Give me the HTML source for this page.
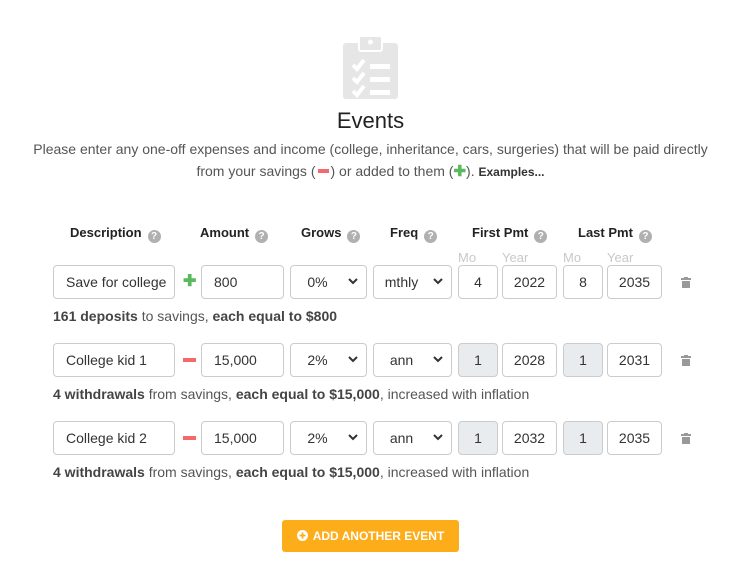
<!DOCTYPE html>
<html><head><meta charset="utf-8"><style>
*{box-sizing:border-box;margin:0;padding:0}
body{width:741px;height:565px;background:#fff;font-family:"Liberation Sans",sans-serif;color:#333;position:relative;overflow:hidden}
.a{position:absolute}
.in{position:absolute;height:34px;border:1px solid #ccc;border-radius:4px;background:#fff;font-size:14px;color:#333;line-height:32px;text-align:center}
.dis{background:#e9ecef}
.lt{text-align:left;padding-left:12px}
.sel span{position:absolute;left:0;right:22px;text-align:center}
.sel svg{position:absolute;right:8px;top:12px}
.h{position:absolute;top:225px;font-size:13px;font-weight:bold;color:#222;white-space:nowrap}
.q{display:inline-block;width:13px;height:13px;border-radius:50%;background:#b0b0b0;color:#fff;font-size:10px;line-height:13px;text-align:center;margin-left:6px;vertical-align:-2px}
.ml{position:absolute;top:250px;font-size:13px;color:#c8c8c8}
.sum{position:absolute;left:53px;font-size:14px;color:#555;white-space:nowrap}
.sum b{color:#444}
.tr{position:absolute;left:681px}
</style></head><body>
<svg class="a" style="left:343px;top:35px" width="55" height="64" viewBox="0 0 55 64">
<rect x="0" y="8" width="55" height="56" rx="3" fill="#e6e6e6"/>
<rect x="16" y="1" width="23" height="15" rx="2" fill="#e6e6e6" stroke="#fff" stroke-width="2"/>
<circle cx="27.5" cy="7" r="2.5" fill="#fff"/>
<g stroke="#fff" stroke-width="4" fill="none"><path d="M10 30l4 4 7-9M10 43l4 4 7-9M10 56l4 4 7-9"/></g>
<g fill="#fff"><rect x="27" y="29" width="20" height="5"/><rect x="27" y="42" width="20" height="5"/><rect x="27" y="55" width="20" height="5"/></g>
</svg>
<div class="a" style="left:0;width:741px;top:108px;text-align:center;font-size:22px;color:#222">Events</div>
<div class="a" style="left:0;width:741px;top:138px;text-align:center;font-size:14px;color:#555;line-height:22px">Please enter any one-off expenses and income (college, inheritance, cars, surgeries) that will be paid directly<br>from your savings (<span style="display:inline-block;width:11px;height:4px;background:#f46a6a;vertical-align:3px;margin:0 2px"></span>) or added to them (<span style="color:#5cb85c;font-weight:bold;font-size:15px">✚</span>). <b style="font-size:12px;color:#333">Examples...</b></div>

<div class="h" style="left:70px">Description<span class="q">?</span></div>
<div class="h" style="left:200px">Amount<span class="q">?</span></div>
<div class="h" style="left:301px">Grows<span class="q">?</span></div>
<div class="h" style="left:390px">Freq<span class="q">?</span></div>
<div class="h" style="left:472px">First Pmt<span class="q">?</span></div>
<div class="h" style="left:578px">Last Pmt<span class="q">?</span></div>
<div class="ml" style="left:458px">Mo</div><div class="ml" style="left:502px">Year</div>
<div class="ml" style="left:563px">Mo</div><div class="ml" style="left:607px">Year</div>

<div class="in lt" style="left:53px;top:265px;width:122px">Save for college</div>
<div class="a" style="left:183px;top:271px;color:#5cb85c;font-size:16px;font-weight:bold">✚</div>
<div class="in lt" style="left:201px;top:265px;width:83px">800</div>
<div class="in sel" style="left:290px;top:265px;width:77px"><span>0%</span><svg width="10" height="7"><path d="M1 1l4 4 4-4" stroke="#333" stroke-width="2" fill="none"/></svg></div>
<div class="in sel" style="left:373px;top:265px;width:79px"><span>mthly</span><svg width="10" height="7"><path d="M1 1l4 4 4-4" stroke="#333" stroke-width="2" fill="none"/></svg></div>
<div class="in" style="left:458px;top:265px;width:40px">4</div>
<div class="in" style="left:502px;top:265px;width:55px">2022</div>
<div class="in" style="left:563px;top:265px;width:40px">8</div>
<div class="in" style="left:607px;top:265px;width:55px">2035</div>
<svg class="tr" style="top:277px" width="10" height="11"><rect x="0" y="1" width="10" height="2" fill="#999"/><rect x="3" y="0" width="4" height="2" fill="#999"/><rect x="1" y="4" width="8" height="7" fill="#999"/></svg>
<div class="sum" style="top:308px"><b>161 deposits</b> to savings, <b>each equal to $800</b></div>

<div class="in lt" style="left:53px;top:343px;width:122px">College kid 1</div>
<div class="a" style="left:183px;top:358px;width:13px;height:4px;background:#f46a6a"></div>
<div class="in lt" style="left:201px;top:343px;width:83px">15,000</div>
<div class="in sel" style="left:290px;top:343px;width:77px"><span>2%</span><svg width="10" height="7"><path d="M1 1l4 4 4-4" stroke="#333" stroke-width="2" fill="none"/></svg></div>
<div class="in sel" style="left:373px;top:343px;width:79px"><span>ann</span><svg width="10" height="7"><path d="M1 1l4 4 4-4" stroke="#333" stroke-width="2" fill="none"/></svg></div>
<div class="in dis" style="left:458px;top:343px;width:40px">1</div>
<div class="in" style="left:502px;top:343px;width:55px">2028</div>
<div class="in dis" style="left:563px;top:343px;width:40px">1</div>
<div class="in" style="left:607px;top:343px;width:55px">2031</div>
<svg class="tr" style="top:355px" width="10" height="11"><rect x="0" y="1" width="10" height="2" fill="#999"/><rect x="3" y="0" width="4" height="2" fill="#999"/><rect x="1" y="4" width="8" height="7" fill="#999"/></svg>
<div class="sum" style="top:386px"><b>4 withdrawals</b> from savings, <b>each equal to $15,000</b>, increased with inflation</div>

<div class="in lt" style="left:53px;top:421px;width:122px">College kid 2</div>
<div class="a" style="left:183px;top:436px;width:13px;height:4px;background:#f46a6a"></div>
<div class="in lt" style="left:201px;top:421px;width:83px">15,000</div>
<div class="in sel" style="left:290px;top:421px;width:77px"><span>2%</span><svg width="10" height="7"><path d="M1 1l4 4 4-4" stroke="#333" stroke-width="2" fill="none"/></svg></div>
<div class="in sel" style="left:373px;top:421px;width:79px"><span>ann</span><svg width="10" height="7"><path d="M1 1l4 4 4-4" stroke="#333" stroke-width="2" fill="none"/></svg></div>
<div class="in dis" style="left:458px;top:421px;width:40px">1</div>
<div class="in" style="left:502px;top:421px;width:55px">2032</div>
<div class="in dis" style="left:563px;top:421px;width:40px">1</div>
<div class="in" style="left:607px;top:421px;width:55px">2035</div>
<svg class="tr" style="top:433px" width="10" height="11"><rect x="0" y="1" width="10" height="2" fill="#999"/><rect x="3" y="0" width="4" height="2" fill="#999"/><rect x="1" y="4" width="8" height="7" fill="#999"/></svg>
<div class="sum" style="top:464px"><b>4 withdrawals</b> from savings, <b>each equal to $15,000</b>, increased with inflation</div>

<div class="a" style="left:282px;top:520px;width:177px;height:32px;background:#fdad1a;border-radius:3px;color:#fff;font-size:12px;font-weight:bold;line-height:32px;text-align:center"><svg width="11" height="11" style="vertical-align:-1px;margin-right:5px"><circle cx="5.5" cy="5.5" r="5.5" fill="#fff"/><path d="M5.5 2.5v6M2.5 5.5h6" stroke="#fdad1a" stroke-width="1.8"/></svg>ADD ANOTHER EVENT</div>
</body></html>
